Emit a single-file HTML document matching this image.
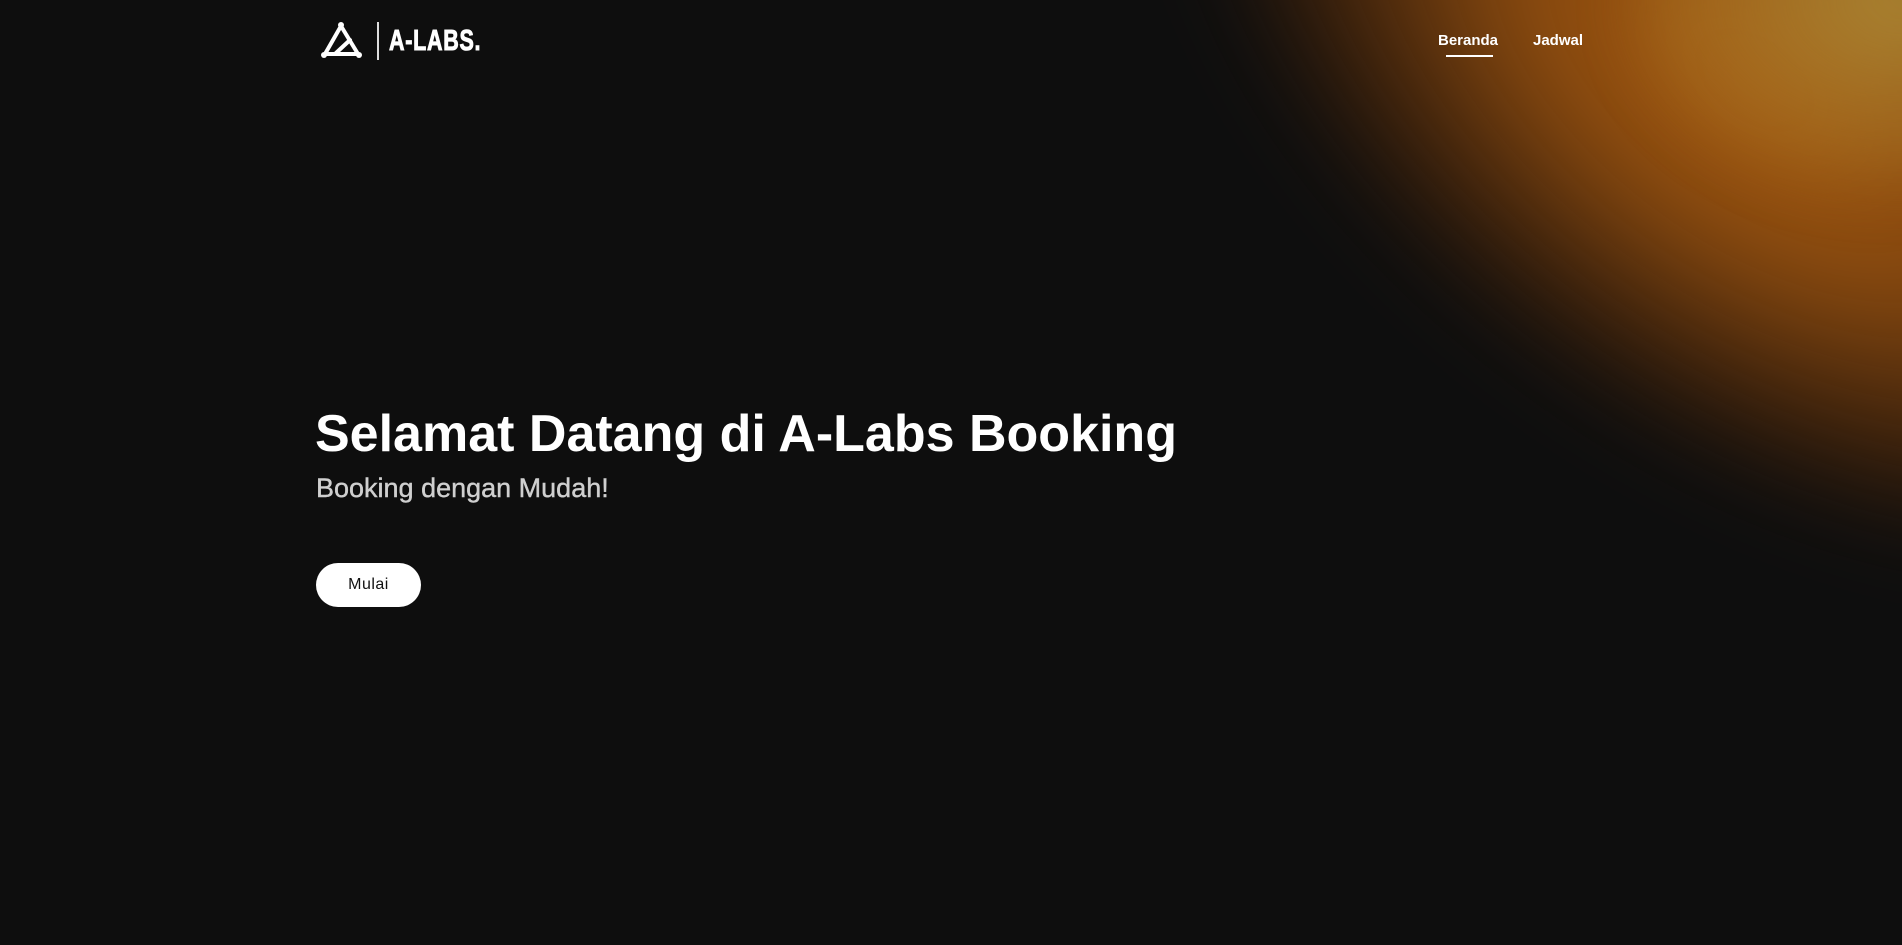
<!DOCTYPE html>
<html><head><meta charset="utf-8"><style>
html,body{margin:0;padding:0;width:1902px;height:945px;overflow:hidden}
body{background:#0e0e0e;font-family:"Liberation Sans",sans-serif;color:#fff;position:relative}
.blob{position:absolute;left:1130px;top:-260px;width:1250px;height:680px;border-radius:50%;transform:rotate(36deg);
background:radial-gradient(ellipse at center, rgba(165,90,15,1) 0%, rgba(150,80,15,0.9) 30%, rgba(110,55,10,0.55) 55%, rgba(60,30,8,0.25) 70%, rgba(14,14,14,0) 82%);filter:blur(45px)}
.blob2{position:absolute;left:1640px;top:-180px;width:520px;height:360px;border-radius:50%;
background:radial-gradient(ellipse at center, rgba(175,140,55,0.9) 0%, rgba(170,120,40,0.55) 50%, rgba(160,100,20,0) 100%);filter:blur(30px)}
.logo{position:absolute;left:320px;top:20px}
.div{position:absolute;left:377px;top:22px;width:2px;height:38px;background:#ddd}
.brand{position:absolute;left:389px;top:25px;font-size:29px;font-weight:bold;letter-spacing:1px;transform:scaleX(0.74);transform-origin:left;-webkit-text-stroke:1px #fff}
.nav{position:absolute;top:32px;font-size:15px;font-weight:bold}
.ul{position:absolute;left:1446px;top:55px;width:47px;height:2px;background:#fff}
h1{position:absolute;left:315px;top:404px;margin:0;font-size:52px;font-weight:bold;white-space:nowrap}
.sub{position:absolute;left:316px;top:473px;font-size:27px;color:#cfcfcf;-webkit-text-stroke:0.4px #cfcfcf}
.btn{position:absolute;left:316px;top:563px;width:105px;height:44px;border-radius:22px;background:#fff;color:#111;font-size:16px;text-align:center;line-height:44px;letter-spacing:.5px}
</style></head><body>
<div class="blob"></div>
<div class="blob2"></div>
<svg class="logo" width="46" height="42" viewBox="0 0 46 42">
<g fill="none" stroke="#fff" stroke-width="4" stroke-linecap="round" stroke-linejoin="round">
<path d="M21 6 L5 34"/><path d="M21 6 L38 34"/><path d="M6 34 L38 34"/><path d="M30 20 L16 33"/>
</g>
<circle cx="21" cy="5" r="3" fill="#fff"/><circle cx="4" cy="35" r="3" fill="#fff"/><circle cx="39" cy="35" r="3" fill="#fff"/>
</svg>
<div class="div"></div>
<div class="brand">A-LABS.</div>
<div class="nav" style="left:1438px">Beranda</div>
<div class="ul"></div>
<div class="nav" style="left:1533px">Jadwal</div>
<h1>Selamat Datang di A-Labs Booking</h1>
<div class="sub">Booking dengan Mudah!</div>
<div class="btn">Mulai</div>
</body></html>
